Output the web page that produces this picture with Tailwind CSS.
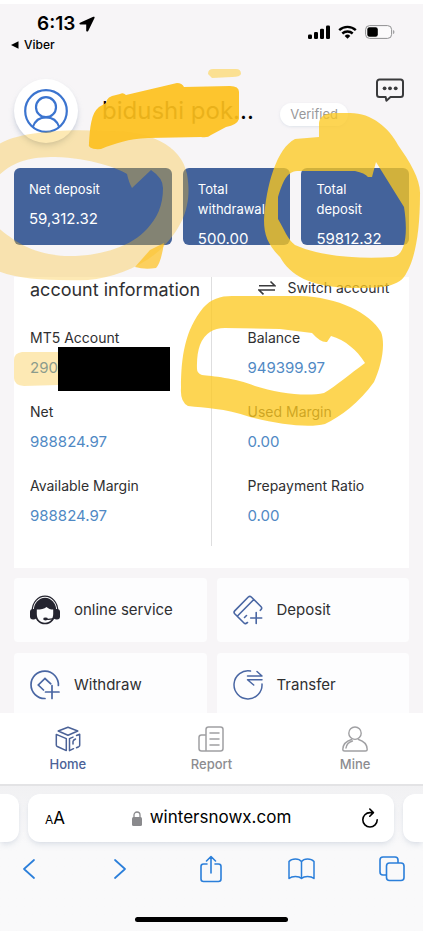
<!DOCTYPE html>
<html lang="en">
<head>
<meta charset="utf-8">
<meta name="viewport" content="width=device-width, initial-scale=1">
<title>Account home</title>
<script src="https://cdn.jsdelivr.net/npm/@tailwindcss/browser@4"></script>
</head>
<body class="relative flex h-screen flex-col overflow-hidden border-t-4 border-white bg-[#f7f5f7] font-['Inter',sans-serif] text-[#2f2f31]">

<!-- Status bar -->
<header class="flex items-start justify-between pt-2 pr-7 pl-2.5 text-black">
  <div>
    <div class="flex h-6 items-center gap-1 pl-[27px] text-[19px] font-semibold">
      <span>6:13</span>
      <svg class="size-4" viewBox="0 0 16 16" aria-hidden="true"><path d="M14.300.8 1 6.800c-1 .5-.7 1.800.4 1.800h5.800v5.900c0 1.200 1.500 1.500 2 .4L15.500 2C15.900 1 15.200.4 14.300.8Z" fill="currentColor"/></svg>
    </div>
    <a href="#" class="flex h-[18px] items-center gap-1 text-xs font-medium">
      <svg class="h-2 w-2.5" viewBox="0 0 10 8" aria-hidden="true"><path d="M1 4 8.500.3v7.400Z" fill="currentColor"/></svg>
      Viber
    </a>
  </div>
  <div class="flex items-center gap-2 pt-[13px]">
    <svg class="h-3.5 w-[22px]" viewBox="0 0 22 14" aria-label="Signal"><g fill="currentColor"><rect x="0" y="9.500" width="4" height="4.500" rx="1.200"/><rect x="6" y="7" width="4" height="7" rx="1.200"/><rect x="12" y="3.800" width="4" height="10.200" rx="1.200"/><rect x="18" y="0.500" width="4" height="13.500" rx="1.200"/></g></svg>
    <svg class="h-3.5 w-[19px]" viewBox="0 0 19 14" aria-label="Wi-Fi"><g fill="none" stroke="currentColor" stroke-width="2.400"><path d="M1.200 5.200a12 12 0 0 1 16.600 0"/><path d="M4.300 8.500a7.600 7.600 0 0 1 10.400 0"/></g><path d="M9.500 13.800 6.700 10.900a4 4 0 0 1 5.600 0Z" fill="currentColor"/></svg>
    <svg class="h-3.5 w-[30px]" viewBox="0 0 30 14" aria-label="Battery"><rect x=".6" y=".6" width="26" height="12.800" rx="4" fill="#fbfafb" stroke="#8f8f91"/><rect x="2.300" y="2.200" width="10.500" height="9.600" rx="2.200" fill="#000"/><path d="M28.200 4.900c1.600.6 1.600 3.600 0 4.200Z" fill="#8f8f91"/></svg>
  </div>
</header>

<main class="min-h-0 flex-1 overflow-hidden px-3.5 pt-[25px]">
  <!-- Profile -->
  <section class="flex h-16 items-start">
    <div class="flex size-16 shrink-0 items-center justify-center rounded-full bg-white shadow-md shadow-slate-400/40">
      <svg class="size-11" viewBox="0 0 44 44" fill="none" stroke="#3b74cf" stroke-width="2.200" aria-hidden="true"><circle cx="22" cy="22" r="20.800"/><circle cx="22" cy="18.200" r="10"/><path d="M8.800 38C11 31.500 16 28.300 22 28.300S33 31.500 35.200 38"/></svg>
    </div>
    <h1 class="ml-6 pt-[18px] text-2xl leading-7 whitespace-nowrap text-black">bidushi pok...</h1>
    <span class="mt-6 ml-auto rounded-full bg-white px-2.5 text-[13px] leading-[23px] text-[#98989b] shadow-sm shadow-slate-300/40">Verified</span>
    <button type="button" aria-label="Messages" class="-mt-0.5 mr-1 ml-[27px] shrink-0">
      <svg class="h-7 w-[30px]" viewBox="0 0 30 28" fill="none" stroke="#3a3a3c" stroke-width="2" stroke-linejoin="round"><path d="M4.500 2.400h21a2.500 2.500 0 0 1 2.500 2.500v12.700a2.500 2.500 0 0 1-2.500 2.500H15.500L11.400 23.700l-.7-3.600H4.500A2.500 2.500 0 0 1 2 17.600V4.900a2.500 2.500 0 0 1 2.500-2.500Z"/><g fill="#3a3a3c" stroke="none"><circle cx="9.600" cy="11.300" r="1.900"/><circle cx="15" cy="11.300" r="1.900"/><circle cx="20.700" cy="11.300" r="1.900"/></g></svg>
    </button>
  </section>

  <!-- Totals -->
  <section class="mt-[25px] grid grid-cols-[157fr_107fr_107fr] gap-[11px] text-[13px] leading-5 text-white">
    <div class="h-[77px] overflow-hidden rounded-md bg-[#44639b] pt-[11px] pl-[15px]"><p>Net deposit</p><p class="mt-2.5 text-[15px]">59,312.32</p></div>
    <div class="h-[77px] overflow-hidden rounded-md bg-[#44639b] pt-[11px] pl-[15px]"><p>Total<br>withdrawal</p><p class="mt-2.5 text-[15px]">500.00</p></div>
    <div class="h-[77px] overflow-hidden rounded-md bg-[#44639b] pt-[11px] pl-[15px]"><p>Total<br>deposit</p><p class="mt-2.5 text-[15px]">59812.32</p></div>
  </section>

  <!-- Account information -->
  <section class="mt-8 bg-white pb-[22px] text-sm leading-5">
    <div class="grid grid-cols-2">
      <div class="border-r border-[#dededf] pb-5 pl-4">
        <h2 class="mb-7 pt-[3px] text-lg leading-5 whitespace-nowrap">account information</h2>
        <dl class="flex flex-col gap-6">
          <div><dt>MT5 Account</dt><dd class="mt-2.5 flex text-[15px] text-[#5089c4]">290<span class="relative"><span class="absolute -top-[11px] left-0 h-11 w-28 bg-black"></span></span></dd></div>
          <div><dt>Net</dt><dd class="mt-2.5 text-[15px] text-[#5089c4]">988824.97</dd></div>
          <div><dt>Available Margin</dt><dd class="mt-2.5 text-[15px] text-[#5089c4]">988824.97</dd></div>
        </dl>
      </div>
      <div class="pb-5 pl-9">
        <button type="button" class="mb-[30px] ml-2.5 flex h-[21px] items-center gap-3 whitespace-nowrap">
          <svg class="h-4 w-[18px]" viewBox="0 0 18 16" fill="none" stroke="#3a3a3c" stroke-width="1.600" aria-hidden="true"><path d="M1 5.800h16L12.500 1.500M17 10H1l4.500 4.300"/></svg>
          Switch account
        </button>
        <dl class="flex flex-col gap-6">
          <div><dt>Balance</dt><dd class="mt-2.5 text-[15px] text-[#5089c4]">949399.97</dd></div>
          <div><dt>Used Margin</dt><dd class="mt-2.5 text-[15px] text-[#5089c4]">0.00</dd></div>
          <div><dt>Prepayment Ratio</dt><dd class="mt-2.5 text-[15px] text-[#5089c4]">0.00</dd></div>
        </dl>
      </div>
    </div>
  </section>

  <!-- Actions -->
  <section class="mt-2.5 grid grid-cols-2 gap-x-2.5 gap-y-[11px] text-[15px]">
    <button type="button" class="flex h-16 items-center gap-3.5 rounded-sm bg-[#fdfdfe] pl-4">
      <svg class="size-[30px]" viewBox="0 0 30 30" aria-hidden="true"><path d="M2.300 15.500a12.700 14.300 0 0 1 25.400 0" fill="none" stroke="#24242f" stroke-width="1.200"/><ellipse cx="15" cy="16" rx="11.300" ry="13.300" fill="#24242f"/><rect x="0" y="14" width="6.500" height="10.500" rx="3" fill="#24242f"/><rect x="23.500" y="14" width="6.500" height="10.500" rx="3" fill="#24242f"/><path d="M6.800 14.600c4 0 7.500-.8 9.700-2.600 1.600 1.700 4.300 2.600 6.700 2.600v4.400c0 5-3.200 8.700-8.200 8.700s-8.200-3.700-8.200-8.700Z" fill="#fdfdfe"/><path d="M25.500 22.500c-2.500 1.800-6 2-9.500 1.700" fill="none" stroke="#24242f" stroke-width="1.200"/><ellipse cx="15.500" cy="24" rx="2.300" ry="1.400" fill="#24242f"/></svg>
      online service
    </button>
    <button type="button" class="flex h-16 items-center gap-3.5 rounded-sm bg-[#fdfdfe] pl-4">
      <svg class="size-[30px]" viewBox="0 0 30 30" fill="none" stroke="#4966a3" stroke-width="1.600" stroke-linecap="round" stroke-linejoin="round" aria-hidden="true"><path d="M14.500 27.500 13 28.500q-1 .5-2-.5L1.700 18.700q-1.300-1.400 0-2.800L15.300 2q1.500-1.300 3 0l9.800 9.800q1.200 1.200 0 2.600l-.8.900M5 20.500 20.800 4.500"/><path d="m11.500 22.500 2-2"/><path d="M23.200 17.500v11M17.700 23h11"/></svg>
      Deposit
    </button>
    <button type="button" class="flex h-16 items-center gap-3.5 rounded-sm bg-[#fdfdfe] pl-4">
      <svg class="size-[30px]" viewBox="0 0 30 30" fill="none" stroke="#4966a3" stroke-width="1.700" stroke-linecap="round" aria-hidden="true"><path d="M15 28.500A13.700 13.700 0 1 1 28.400 15.500"/><path d="m13.500 20-5.200-5L15 8.500l5.800 5.300"/><path d="M22 15.500v13M15.500 22H29"/></svg>
      Withdraw
    </button>
    <button type="button" class="flex h-16 items-center gap-3.5 rounded-sm bg-[#fdfdfe] pl-4">
      <svg class="size-[30px]" viewBox="0 0 30 30" fill="none" stroke="#4966a3" stroke-width="1.500" stroke-linecap="round" stroke-linejoin="round" aria-hidden="true"><path d="M17.500 1.100A14 14 0 1 0 29 14"/><path d="M14.500 6H29l-5-4.500M29 9.800H14.500l6.200 5.200"/></svg>
      Transfer
    </button>
  </section>
</main>

<!-- App tabs -->
<nav class="h-[73px] shrink-0 border-b-2 border-[#e3e3e5] bg-white text-[13px] leading-4 font-medium text-[#8c8c90]">
  <div class="-mx-1 grid grid-cols-3">
  <a href="#" class="flex flex-col items-center gap-1 pt-[13px] text-[#4b6297]">
    <svg class="size-[26px]" viewBox="0 0 26 26" fill="none" stroke="currentColor" stroke-width="1.500" stroke-linejoin="round" stroke-linecap="round" aria-hidden="true"><path d="M13 1.200 22.800 5 13 9.200 3.200 5ZM1.300 8.400l10 4.200v12L2.300 20.500q-1-.5-1-1.500V8.400ZM18.500 22.700l-4 2V12.600l3.500-1.500M21.500 9.500l3.200-1.300v11q0 1-1 1.500l-2.200 1M18 18v-2.500q.2-1.500 2.500-2.500"/></svg>
    Home
  </a>
  <a href="#" class="flex flex-col items-center gap-1 pt-[13px]">
    <svg class="size-[26px]" viewBox="0 0 26 26" fill="none" stroke="#a0a0a3" stroke-width="1.500" stroke-linecap="round" aria-hidden="true"><path d="M8 9H3.500Q1 9 1 11.500v11Q1 25 3.500 25h19q2.500 0 2.500-2.500v-19Q25 1 22.500 1h-12Q8 1 8 3.500V25M12 7h9M12 13h9M12 19h9"/></svg>
    Report
  </a>
  <a href="#" class="flex flex-col items-center gap-1 pt-[13px]">
    <svg class="size-[26px]" viewBox="0 0 26 26" fill="none" stroke="#a0a0a3" stroke-width="1.400" stroke-linecap="round" aria-hidden="true"><circle cx="13" cy="7.200" r="6.200"/><path d="M9.500 13.500C4.500 15 1 18.500.8 23.200q0 1.800 1.800 1.800h20.800q1.800 0 1.800-1.800C25 18.500 21.500 15 16.500 13.500M4 22c.5-3.500 3-6 6.500-7"/></svg>
    Mine
  </a>
  </div>
</nav>

<!-- Browser controls -->
<footer class="shrink-0 bg-linear-to-b from-[#f1f1f3] via-[#f9f9fa] via-40% to-[#f9f9fa] pt-2 pb-[9px]">
  <div class="flex h-12 gap-[9px]">
    <div class="w-[19px] rounded-r-xl bg-white shadow-md shadow-slate-400/20"></div>
    <div class="flex flex-1 items-center justify-between rounded-xl bg-white pr-4 pl-[17px] text-black shadow-md shadow-slate-400/20">
      <button type="button" aria-label="Page settings" class="flex w-4 items-baseline text-xs">A<span class="text-[17px]">A</span></button>
      <a href="#" class="flex items-center gap-2 text-[17px]">
        <svg class="h-[15px] w-2.5" viewBox="0 0 10 15" aria-hidden="true"><rect y="6" width="10" height="9" rx="1.500" fill="#8a8a8d"/><path d="M2 7V4a3 3 0 0 1 6 0v3" fill="none" stroke="#8a8a8d" stroke-width="1.300"/></svg>
        wintersnowx.com
      </a>
      <button type="button" aria-label="Reload"><svg class="h-5 w-4" viewBox="0 0 16 20" fill="none" stroke="#000" stroke-width="1.600" stroke-linecap="round" stroke-linejoin="round"><path d="M15.200 11.800A7.200 7.200 0 1 1 8 4.600h3.200M7.800 1l3.600 3.600L7.800 8.200"/></svg></button>
    </div>
    <div class="w-[20px] rounded-l-xl bg-white shadow-md shadow-slate-400/20"></div>
  </div>
  <div class="mt-[13px] flex h-7 items-center justify-between pr-[17px] pl-[15px] text-[#2b7fda]">
    <button type="button" aria-label="Back" class="flex w-7 justify-center"><svg class="h-5 w-3.5" viewBox="0 0 14 20" fill="none" stroke="currentColor" stroke-width="1.700" stroke-linecap="round" stroke-linejoin="round"><path d="M12 1 2 10l10 9"/></svg></button>
    <button type="button" aria-label="Forward" class="flex w-7 justify-center"><svg class="h-5 w-3.5" viewBox="0 0 14 20" fill="none" stroke="currentColor" stroke-width="1.700" stroke-linecap="round" stroke-linejoin="round"><path d="m2 1 10 9-10 9"/></svg></button>
    <button type="button" aria-label="Share" class="flex w-7 justify-center"><svg class="h-7 w-[22px]" viewBox="0 0 22 28" fill="none" stroke="currentColor" stroke-width="1.600" stroke-linecap="round" stroke-linejoin="round"><path d="M7 9H3.500Q1 9 1 11.500V24q0 2.500 2.500 2.500h15Q21 26.500 21 24V11.500Q21 9 18.500 9H15M11 18V1.500M6.500 6 11 1.500 15.500 6"/></svg></button>
    <button type="button" aria-label="Bookmarks" class="flex w-7 justify-center"><svg class="h-6 w-[27px]" viewBox="0 0 27 24" fill="none" stroke="currentColor" stroke-width="1.500" stroke-linejoin="round"><path d="M13.500 4.500C11 1 4 1 1 4.500v17c3-2.800 10-2.800 12.500 0 2.500-2.800 9.500-2.800 12.500 0v-17C23 1 16 1 13.500 4.500Zm0 0v17"/></svg></button>
    <button type="button" aria-label="Tabs" class="flex w-7 justify-center"><svg class="size-[26px]" viewBox="0 0 26 26" fill="none" stroke="currentColor" stroke-width="1.600"><path d="M7.500 19H4q-3 0-3-3V4q0-3 3-3h12q3 0 3 3v3"/><rect x="7.500" y="7" width="17.500" height="17.500" rx="3"/></svg></button>
  </div>
  <div class="mx-auto mt-[34px] h-[5px] w-[36%] rounded-full bg-black"></div>
</footer>

<!-- Highlighter marks drawn over the page -->
<svg class="pointer-events-none absolute -top-1 left-0 w-full" viewBox="0 0 423 440" aria-hidden="true">
  <path d="M89 143C90 128 91 113 99 107L106 103Q107 96 116 95L120 94Q123 92 126 95L177 83Q182 83 184 87L230 86Q239 86 239 92V119Q237 125 226 127L211 135Q208 138 201 137L148 138C128 139 116 143 101 149Q87 150 89 143Z" fill="#fdc01c" fill-opacity=".92"/>
  <path d="M208 74Q208 69 213 69H236Q241 69 241 74 240 77 232 77L212 78Z" fill="#fcd766" fill-opacity=".7"/>
  <path fill-rule="evenodd" d="M-4 146C12 134 55 128 105 131C145 130 181 143 187 174C192 202 185 226 160 250C140 268 112 278 88 280C55 281 15 280-4 270ZM-4 178V226C15 242 32 254 65 256C96 257 130 248 147 229C157 218 163 206 163 188Q163 178 151 170L132 188Q129 183 127 174C117 168 91 158 55 157C28 157 12 162-4 178Z" fill="#fac028" fill-opacity=".35"/>
  <path d="M135 267 150 250 164 243Q161 263 156 268 145 270 135 267Z" fill="#fdc01c" fill-opacity=".7"/>
  <path fill-rule="evenodd" d="M319 137V124Q319 114 333 113L350 113C372 113 389 128 398 145C410 162 421 180 420 195C420 232 415 258 407 272C400 288 380 288 350 288C310 287 290 275 280 257C268 245 264 235 264 220C266 185 277 148 295 139ZM376 162 404 207C408 232 406 255 393 257C360 259 322 257 295 245C288 240 284 229 278 219V197C283 182 286 172 297 171H355Q365 173 368 177L372 177Z" fill="#fdc81f" fill-opacity=".77"/>
  <path fill-rule="evenodd" d="M181 388C181 357 185 330 203 308C211 299 220 296 232 296H300C338 297 370 313 381 332C386 345 381 367 374 382C360 402 340 417 325 424C310 428 280 425 250 417C224 408 205 408 188 406Q180 402 181 388ZM197 369Q196 341 210 332 216 328 225 328L280 329 312 333Q321 343 327 342L331 336C345 340 357 350 365 363C350 374 336 386 324 393C306 397 277 393 255 386C235 378 212 376 202 375Q197 373 197 369Z" fill="#fdc81f" fill-opacity=".77"/>
  <path d="M14 360Q14 353 22 352H58V385L24 386Q14 385 14 378Z" fill="#fac028" fill-opacity=".35"/>
</svg>
</body>
</html>
